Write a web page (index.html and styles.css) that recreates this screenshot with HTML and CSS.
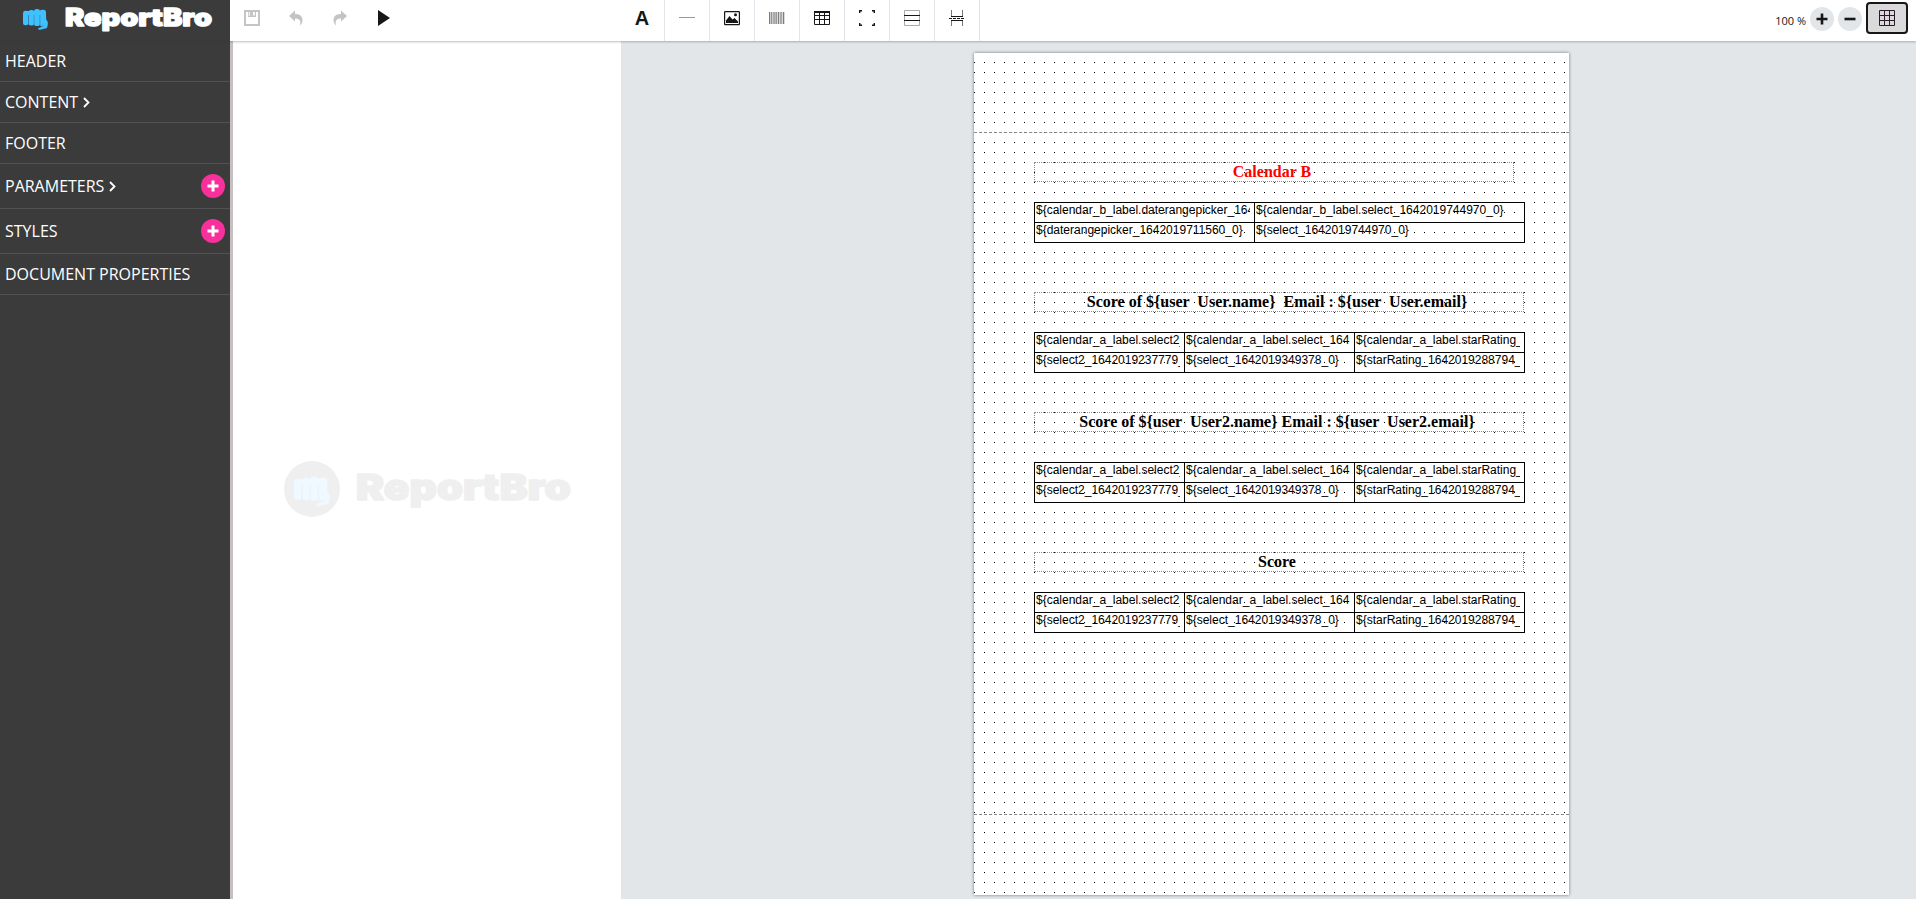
FILE: index.html
```html
<!DOCTYPE html>
<html lang="en">
<head>
<meta charset="utf-8">
<title>ReportBro Designer</title>
<link rel="stylesheet" href="styles.css">
</head>
<body>
<svg class="defs" aria-hidden="true">
  <symbol id="fist" viewBox="0 0 25 21">
    <g fill="currentColor" stroke="none">
      <rect x="0" y="1.800" width="5.400" height="14.500" rx="2.400"/>
      <rect x="5.500" y="1" width="5.800" height="15.500" rx="2.500"/>
      <rect x="11" y="0" width="6" height="17" rx="2.600"/>
      <rect x="16.500" y=".8" width="6.500" height="16.500" rx="2.600"/>
      <path d="M22.500 3.500c.6 1 .6 4 .7 7C25 12.500 25 14 24.700 16l-.5 2.200c-.3.9-.9 1.200-2 1.400l-5.200 1.200c-1.500.2-2-.8-1.600-1.700 1.500-.5 3.200-1 4.100-2.600z"/>
      <path d="M3 2h18v4H3z"/>
    </g>
    <path class="fist-gap" d="M5.500 6v10M11.100 6v11M16.900 6v9c.3 1.700 2 2.700 4 2.300" fill="none" stroke-width=".6" stroke-opacity=".8"/>
  </symbol>
  <symbol id="table-icon" viewBox="0 0 16 16">
    <path d="M.5 1.500h15v13H.5zM.5 5.500h15M.5 9.500h15M5.500 1.500v13M10.500 1.500v13" fill="none" stroke="#171717"/>
    <path d="M0 1h16v2H0z" fill="#171717"/>
  </symbol>
</svg>

<div class="app">
  <header class="topbar">
    <div class="brand">
      <svg class="brand-fist"><use href="#fist"/></svg>
      <svg class="brand-name" width="150" height="34"><text x="1" y="26" textLength="147" lengthAdjust="spacingAndGlyphs">ReportBro</text></svg>
    </div>
    <div class="actions">
      <svg width="16" height="16" viewBox="0 0 16 16"><path d="M1 1h14v14H1z" fill="none" stroke="#c4c4c4" stroke-width="2"/><path d="M4 1h8v6H4z" fill="#c4c4c4"/><path d="M9 2h1.800v3.500H9zM4.800 2h1v4h-1z" fill="#fff"/></svg>
      <svg width="16" height="16" viewBox="0 0 16 16"><path id="undo-shape" d="M1 6 7 .5V4c4.500 0 7.500 2 7.500 6 0 2.500-1 4.300-2.700 5.500C13.300 10.500 11.500 8.500 7 8.500v3z" fill="#c4c4c4"/></svg>
      <svg width="16" height="16" viewBox="0 0 16 16"><use href="#undo-shape" transform="matrix(-1 0 0 1 16 0)"/></svg>
      <svg width="16" height="16" viewBox="0 0 16 16"><path d="M2 0 14 8 2 16z" fill="#171717"/></svg>
    </div>
    <nav class="elements">
      <span class="tool tool-text">A</span>
      <span class="tool"><svg width="16" height="16"><path d="M0 7.500h16" stroke="#999"/></svg></span>
      <span class="tool"><svg width="16" height="16"><rect x=".6" y="1.600" width="14.800" height="13" rx=".6" fill="none" stroke="#171717" stroke-width="1.200"/><path d="M2 13v-2.500L5.500 6l3 3.500L10.500 8l3.500 3.500V13z" fill="#171717"/><circle cx="11.500" cy="4.800" r="1.500" fill="#171717"/></svg></span>
      <span class="tool"><svg width="16" height="16"><path d="M.5 2v12M5 2v12M9.500 2v12M14.500 2v12" stroke="#777"/><path d="M2.500 2v12M7.200 2v12M12 2v12" stroke="#9a9a9a" stroke-width="1.400"/><path d="M0 2h16v12H0z" fill="#888" opacity=".3"/></svg></span>
      <span class="tool"><svg width="16" height="16"><use href="#table-icon"/></svg></span>
      <span class="tool"><svg width="16" height="16"><path d="M.7 3V.7H3M13 .7h2.300V3M15.300 13v2.300H13M3 15.300H.7V13" fill="none" stroke="#171717" stroke-width="1.400"/></svg></span>
      <span class="tool"><svg width="16" height="16"><path d="M.5.5h15v15H.5z" fill="none" stroke="#aaa"/><path d="M0 5.500h16M0 10.500h16" stroke="#171717"/></svg></span>
      <span class="tool"><svg width="16" height="16"><path d="M2.500 0v6.500M13.500 0v6.500M2.500 10v6M13.500 10v6" stroke="#777"/><path d="M2 6.500h12M2 10.500h12" stroke="#171717"/><path d="M0 8.500h16" stroke="#171717" stroke-dasharray="3 1"/></svg></span>
    </nav>
    <div class="view">
      <span class="zoom-level">100 %</span>
      <span class="round"><svg width="12" height="12"><path d="M.5 6h11M6 .5v11" stroke="#171717" stroke-width="2.600"/></svg></span>
      <span class="round"><svg width="12" height="12"><path d="M.5 6h11" stroke="#171717" stroke-width="2.600"/></svg></span>
      <span class="grid-toggle"><svg width="16" height="16"><path d="M.5.5h15v15H.5zM5.500 0v16M10.500 0v16M0 5.500h16M0 10.500h16" fill="none" stroke="#2a1a2a"/></svg></span>
    </div>
  </header>

  <aside class="menu">
    <div class="item">HEADER</div>
    <div class="item">CONTENT<svg class="chevron" width="7" height="11"><path d="m1 1 4.500 4.500L1 10"/></svg></div>
    <div class="item">FOOTER</div>
    <div class="item tall">PARAMETERS<svg class="chevron" width="7" height="11"><path d="m1 1 4.500 4.500L1 10"/></svg><span class="add"><svg width="12" height="12"><path d="M.5 6h11M6 .5v11" stroke="#fff" stroke-width="3"/></svg></span></div>
    <div class="item tall">STYLES<span class="add"><svg width="12" height="12"><path d="M.5 6h11M6 .5v11" stroke="#fff" stroke-width="3"/></svg></span></div>
    <div class="item">DOCUMENT PROPERTIES</div>
  </aside>

  <section class="details">
    <div class="watermark">
      <span class="disc"><svg class="disc-fist"><use href="#fist"/></svg></span>
      <svg class="mark-name" width="218" height="50"><text x="1" y="36" textLength="215" lengthAdjust="spacingAndGlyphs">ReportBro</text></svg>
    </div>
  </section>

  <main class="workspace">
    <div class="paper">
      <svg class="dots" width="595" height="842"><defs><pattern id="grid" width="10" height="10" patternUnits="userSpaceOnUse"><path d="M0 9h1v1H0z"/></pattern></defs><rect width="595" height="842" fill="url(#grid)"/></svg>
      <div class="band band-header"></div>
      <div class="band band-content">
        <h2 class="title red">Calendar B</h2>
        <div class="table two">
          <div class="cell"><p>${calendar_b_label.daterangepicker_1642019711560_0}</p></div><div class="cell"><p>${calendar_b_label.select_1642019744970_0}</p></div>
          <div class="cell"><p>${daterangepicker_1642019711560_0}</p></div><div class="cell"><p>${select_1642019744970_0}</p></div>
        </div>
        <h2 class="title gap-l">Score of ${user  User.name}  Email : ${user  User.email}</h2>
        <div class="table three">
          <div class="cell"><p>${calendar_a_label.select2_</p></div><div class="cell"><p>${calendar_a_label.select_164</p></div><div class="cell"><p>${calendar_a_label.starRating_</p></div>
          <div class="cell"><p>${select2_1642019237779_</p></div><div class="cell"><p>${select_1642019349378_0}</p></div><div class="cell"><p>${starRating_1642019288794_</p></div>
        </div>
        <h2 class="title gap-m">Score of ${user  User2.name} Email : ${user  User2.email}</h2>
        <div class="table three low">
          <div class="cell"><p>${calendar_a_label.select2_</p></div><div class="cell"><p>${calendar_a_label.select_164</p></div><div class="cell"><p>${calendar_a_label.starRating_</p></div>
          <div class="cell"><p>${select2_1642019237779_</p></div><div class="cell"><p>${select_1642019349378_0}</p></div><div class="cell"><p>${starRating_1642019288794_</p></div>
        </div>
        <h2 class="title gap-l">Score</h2>
        <div class="table three">
          <div class="cell"><p>${calendar_a_label.select2_</p></div><div class="cell"><p>${calendar_a_label.select_164</p></div><div class="cell"><p>${calendar_a_label.starRating_</p></div>
          <div class="cell"><p>${select2_1642019237779_</p></div><div class="cell"><p>${select_1642019349378_0}</p></div><div class="cell"><p>${starRating_1642019288794_</p></div>
        </div>
      </div>
      <div class="band band-footer"></div>
    </div>
  </main>
</div>
</body>
</html>
```
FILE: styles.css
```css
* { box-sizing: border-box; }
body { margin: 0; font-family: "Open Sans", "Noto Sans", sans-serif; color: #171717; }
svg { display: block; flex: none; }
.defs { position: absolute; width: 0; height: 0; }

.app {
  display: grid;
  grid-template-columns: 230px 391px 1fr;
  grid-template-rows: 41px 1fr;
  height: 899px;
  overflow: hidden;
}

.topbar {
  grid-column: 1 / -1;
  display: flex;
  background: #fff;
  position: relative;
  box-shadow: 0 1px 2px rgba(60, 70, 80, .35);
}
.brand { width: 230px; display: flex; background: #3b3b3b; padding: 9px 0 0 23px; }
.brand-fist { width: 25px; height: 21px; color: #3fc0ff; stroke: #2f6f90; }
.brand-name { margin: -9px 0 0 16px; }
.brand-name text, .mark-name text {
  font-family: Inter, Roboto, sans-serif;
  font-weight: 900;
  stroke-linejoin: round;
}
.brand-name text { font-size: 24px; fill: #fff; stroke: #fff; stroke-width: 1.3px; }
.actions { display: flex; gap: 28px; width: 389px; padding: 10px 0 0 14px; }

.elements { display: flex; }
.tool {
  width: 45px;
  height: 41px;
  padding: 10px 0 0 14px;
  border-right: 1px solid #e1e4e8;
}
.tool:first-child { width: 46px; }
.tool-text {
  padding: 0 0 0 1px;
  text-align: center;
  font: 700 20px/37px "Liberation Sans", sans-serif;
}

.view { display: flex; margin-left: auto; padding: 2px 8px 0 0; }
.zoom-level { font-size: 11px; line-height: 15px; margin: 11px 4px 0 0; }
.round {
  display: grid;
  place-items: center;
  width: 24px;
  height: 24px;
  margin: 5px 4px 0 0;
  border-radius: 50%;
  background: #e2e6e9;
}
.grid-toggle {
  display: grid;
  place-items: center;
  width: 42px;
  height: 32px;
  border: 2px solid #171717;
  border-radius: 4px;
  background: #dadada;
}

.menu { background: #3b3b3b; border-top: 1px solid #353535; }
.item {
  display: flex;
  align-items: center;
  height: 41px;
  padding: 0 5px;
  border-bottom: 1px solid #525252;
  color: #fff;
  font-size: 16px;
  line-height: 22px;
}
.item:first-child { height: 40px; padding-bottom: 2px; }
.item.tall { height: 45px; }
.chevron { margin: 1px 0 0 5px; fill: none; stroke: #fff; stroke-width: 1.8; }
.add {
  display: grid;
  place-items: center;
  width: 24px;
  height: 24px;
  margin-left: auto;
  border-radius: 50%;
  background: #f8309b;
}

.details {
  border-left: 3px solid #c5c1c1;
  background: #fff;
}
.watermark { display: flex; margin: 420px 0 0 51px; }
.disc {
  display: grid;
  place-items: center;
  width: 56px;
  height: 56px;
  border-radius: 50%;
  background: #efefef;
}
.disc-fist { width: 36px; height: 31px; margin-top: 4px; color: #f0f9ff; stroke: #e5eff5; }
.mark-name { margin: 3px 0 0 15px; }
.mark-name text { font-size: 36px; fill: #efefef; stroke: #efefef; stroke-width: 1.6px; }

.workspace { background: #e2e6e9; padding: 12px 0 0 353px; overflow: hidden; }
.paper {
  position: relative;
  display: flex;
  flex-direction: column;
  width: 595px;
  height: 842px;
  background: #fff;
  box-shadow: 0 0 3px rgba(60, 60, 60, .65);
}
.dots { position: absolute; inset: 0; fill: #000; }
.band { position: relative; }
.band-header { height: 80px; border-bottom: 1px dashed #888; }
.band-content { flex: 1; padding: 29px 44px 0 60px; }
.band-footer { height: 81px; border-top: 1px dashed #888; }

.title {
  width: 490px;
  height: 20px;
  margin: 0;
  padding-right: 4px;
  border: 1px dotted #888;
  font: 700 16px/18px "Liberation Serif", serif;
  text-align: center;
  white-space: pre;
  color: #000;
}
.title.red { width: 480px; color: #f00; }
.title.gap-l { margin-top: 49px; }
.title.gap-m { margin-top: 39px; }

.table {
  display: grid;
  width: 491px;
  margin-top: 20px;
  border-right: 1px solid #000;
  border-bottom: 1px solid #000;
}
.table.low { margin-top: 30px; }
.table.two { grid-template-columns: 220px 270px; }
.table.three { grid-template-columns: 150px 170px 170px; }
.cell {
  height: 20px;
  padding: 0 4px 0 1px;
  border-left: 1px solid #000;
  border-top: 1px solid #000;
}
.cell p {
  margin: 0;
  overflow: hidden;
  font: 12px/14px "Liberation Sans", sans-serif;
  white-space: nowrap;
  color: #000;
}
```
